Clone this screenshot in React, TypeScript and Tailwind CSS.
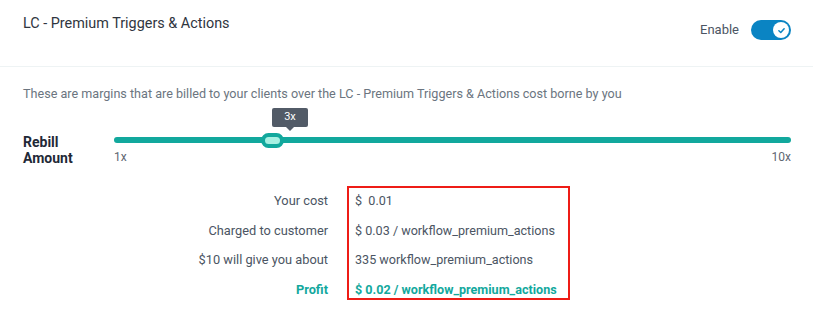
import React from "react";

export default function App() {
  const font = { fontFamily: "Roboto, 'Noto Sans', sans-serif" };
  return (
    <div className="w-[813px] h-[315px] bg-white text-[#374151] overflow-hidden" style={font}>
      {/* Header */}
      <div className="h-[67px] flex items-start justify-between pl-[23px] pr-[22px] border-b border-[#eef3f4]">
        <div className="mt-[14px] text-[14.4px] leading-[20px] text-[#2f3540]">LC - Premium Triggers &amp; Actions</div>
        <div className="mt-[20px] flex items-center gap-[12px]">
          <span className="text-[13px] text-[#4b5563]">Enable</span>
          <div className="w-[40px] h-[20px] rounded-full bg-[#0a84c3] flex items-center justify-end pr-[2px]">
            <div className="w-[16px] h-[16px] rounded-full bg-white flex items-center justify-center">
              <svg width="9" height="9" viewBox="0 0 12 12" fill="none">
                <path d="M2.5 6.3 L5 8.6 L9.5 3.6" stroke="#0a84c3" strokeWidth="2" strokeLinecap="round" strokeLinejoin="round" />
              </svg>
            </div>
          </div>
        </div>
      </div>

      {/* Description */}
      <div className="pl-[23px] mt-[18px] text-[12.6px] leading-[18px] text-[#6b7580]">
        These are margins that are billed to your clients over the LC - Premium Triggers &amp; Actions cost borne by you
      </div>

      {/* Slider */}
      <div className="flex pl-[23px] mt-[30px]">
        <div className="w-[91px] text-[14px] leading-[16px] font-bold text-[#1f2937] mt-[1px]">
          Rebill
          <br />
          Amount
        </div>
        <div className="w-[677px] relative">
          <div className="relative h-[14px] mt-[0px]">
            <div className="absolute left-0 right-0 top-[4px] h-[6px] rounded-full bg-[#12a89d]" />
            <div className="absolute left-[147px] top-0 w-[23px] h-[15px] rounded-full border-[4px] border-[#12a89d] bg-[#a6f0e2]" />
            <div className="absolute left-[158px] top-[-25px] w-[36px] h-[19px] rounded-[2px] bg-[#525b67] text-white text-[11px] flex items-center justify-center">
              3x
            </div>
            <div className="absolute left-[172px] top-[-6px] w-0 h-0 border-l-[4px] border-r-[4px] border-t-[4px] border-l-transparent border-r-transparent border-t-[#525b67]" />
          </div>
          <div className="flex justify-between text-[12px] leading-[14px] text-[#5f6772] mt-[3px]">
            <span>1x</span>
            <span>10x</span>
          </div>
        </div>
      </div>

      {/* Table */}
      <div className="flex mt-[11px] text-[12.6px] leading-[18px] text-[#4b5563]">
        <div className="w-[328px] flex flex-col items-end gap-[11.5px] pt-[15px] text-[12.8px]">
          <span>Your cost</span>
          <span>Charged to customer</span>
          <span>$10 will give you about</span>
          <span className="font-bold text-[#12a89d]">Profit</span>
        </div>
        <div className="ml-[19px] w-[223px] h-[114px] border-2 border-[#ee1c16] pl-[6px] pt-[4px] mt-[9px] flex flex-col gap-[11.5px]">
          <span>$&nbsp; 0.01</span>
          <span>$ 0.03 / workflow_premium_actions</span>
          <span>335 workflow_premium_actions</span>
          <span className="font-bold text-[#12a89d]">$ 0.02 / workflow_premium_actions</span>
        </div>
      </div>
    </div>
  );
}
